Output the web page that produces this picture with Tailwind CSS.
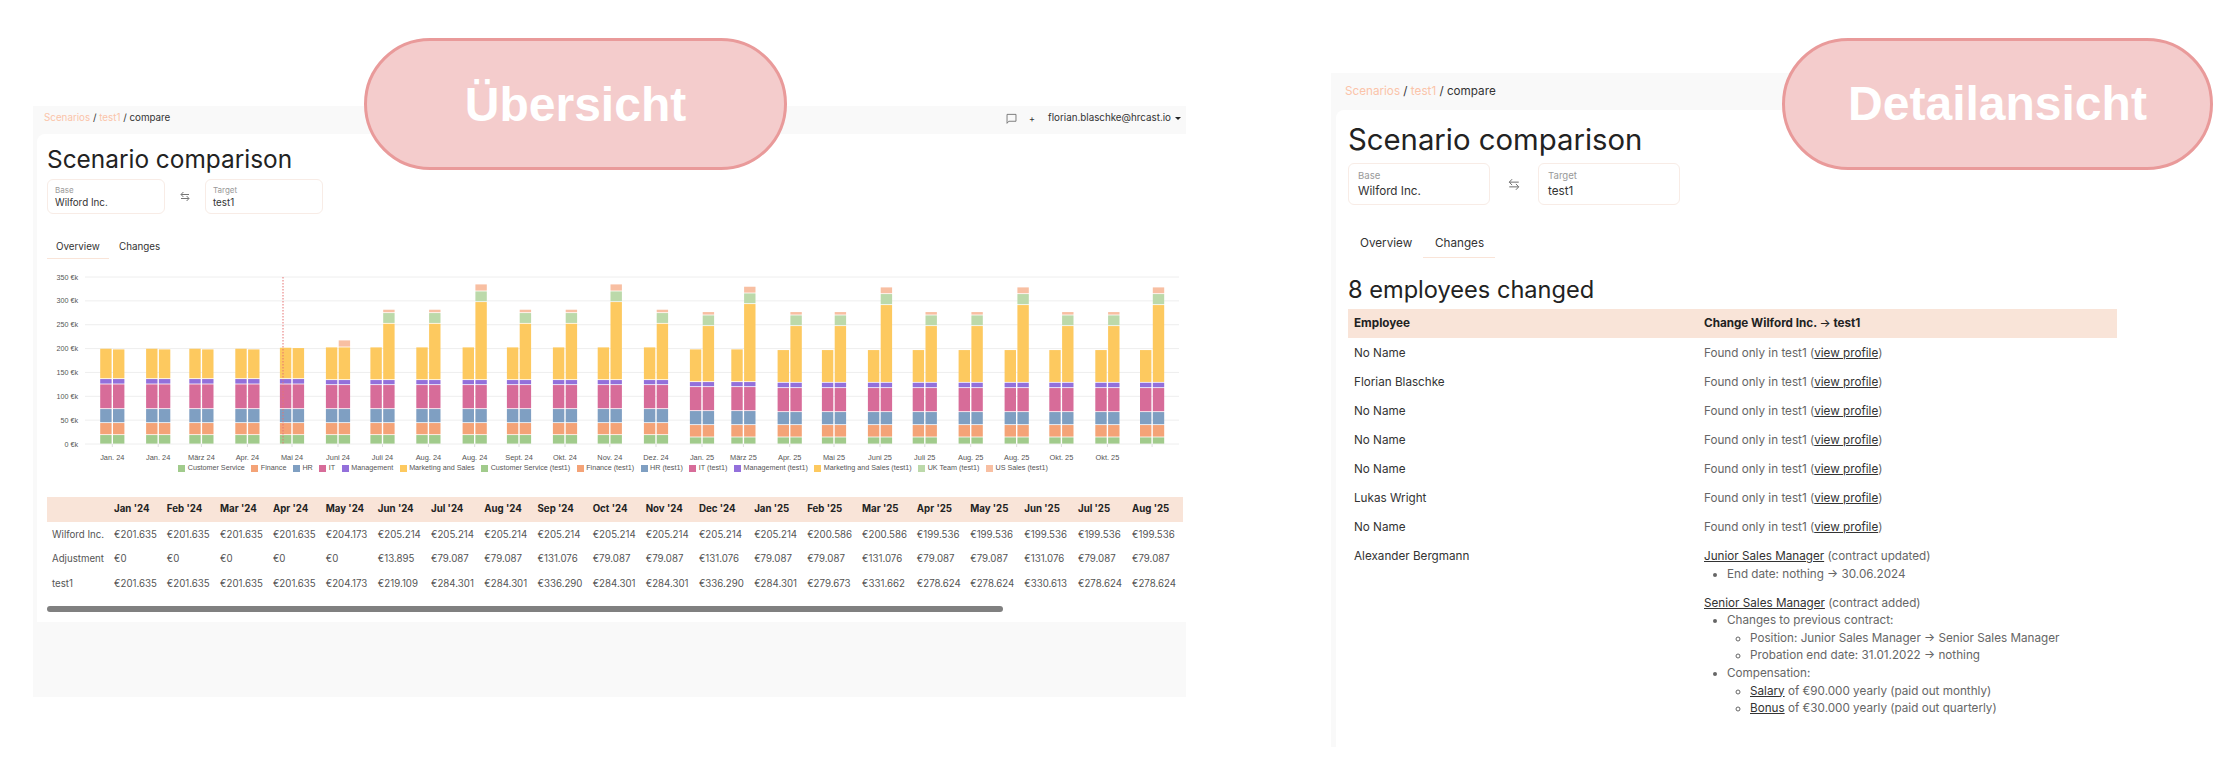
<!DOCTYPE html>
<html lang="en">
<head>
    <meta charset="UTF-8">
    <title>Scenario comparison</title>
    <script src="https://cdn.jsdelivr.net/npm/@tailwindcss/browser@4"></script>
</head>
<body class="bg-white">
<div class="relative w-[2234px] h-[781px] overflow-hidden flex items-start [font-family:Inter,sans-serif] text-[#333]">

    <!-- Overview panel -->
    <div class="ml-[33px] mt-[106px] w-[1153px] h-[591px] bg-[#f9f9f9] shrink-0">
        <div class="h-[28px] flex items-center justify-between pl-[11px] pr-[5px] pb-[3px] text-[9.8px]">
            <div><span class="text-[#fbc4a9]">Scenarios</span> / <span class="text-[#fbc4a9]">test1</span> / compare</div>
            <div class="flex items-center">
                <svg class="w-[11px] h-[11px] text-[#666]" viewBox="0 0 16 16" fill="none" stroke="currentColor" stroke-width="1.2"><path d="M1.5 15V2h13v10H4z"/></svg>
                <span class="ml-[12px] text-[9px]">+</span>
                <span class="ml-[13px]">florian.blaschke@hrcast.io</span>
                <span class="ml-[4px] w-0 h-0 border-x-[3px] border-x-transparent border-t-[3px] border-t-[#222]"></span>
            </div>
        </div>
        <div class="ml-[4px] bg-white rounded-tl-lg px-[10px] pt-[10px] pb-[10px] h-[488px]">
            <h1 class="text-[24.4px] leading-[30px] text-[#222] mb-[5px]">Scenario comparison</h1>
            <div class="flex items-center">
                <div class="w-[118px] h-[35px] border border-[#f8ece6] rounded-md pl-[7px] pt-[4px]">
                    <div class="text-[8px] leading-[12px] text-[#999]">Base</div>
                    <div class="text-[9.8px] leading-[13px]">Wilford Inc.</div>
                </div>
                <div class="w-[40px] flex justify-center">
                    <svg class="w-[10px] h-[11px] text-[#666]" viewBox="0 0 10 11" fill="none" stroke="currentColor" stroke-width="0.9"><path d="M9 3.5H1.2M3.4 1 1 3.5 3.4 6M1 7.5h7.8M6.6 5 9 7.5 6.6 10"/></svg>
                </div>
                <div class="w-[118px] h-[35px] border border-[#f8ece6] rounded-md pl-[7px] pt-[4px]">
                    <div class="text-[8px] leading-[12px] text-[#999]">Target</div>
                    <div class="text-[9.8px] leading-[13px]">test1</div>
                </div>
            </div>
            <div class="mt-[19px] flex text-[9.8px] h-[26px]">
                <div class="w-[62px] pl-[9px] pt-[7px] border-b border-[#f9e4d8]">Overview</div>
                <div class="pl-[10px] pt-[7px]">Changes</div>
            </div>

            <!-- Chart, drawn by renderChart below -->
            <svg id="costChart" class="block mt-[11px] w-[1132px] h-[192px]" viewBox="47 270 1132 192"></svg>
            <div id="chartLegend" class="h-[10px] w-[1132px] mt-[1px] flex justify-center items-center gap-[6.5px] text-[7.2px] text-[#555] [font-family:'Liberation_Sans',Arial,sans-serif]"></div>

            <div class="mt-[24px] w-[1136px] overflow-hidden">
                <table class="w-[1136px] table-fixed text-[9.7px] text-[#555] whitespace-nowrap text-left">
                    <colgroup id="costCols"></colgroup>
                    <thead id="costHead" class="bg-[#f9e4d8] text-[#222]"></thead>
                    <tbody id="costBody"></tbody>
                </table>
            </div>
            <div class="mt-[11px] w-[956px] h-[6px] rounded-full bg-[#808080]"></div>
        </div>
    </div>

    <!-- Detail panel -->
    <div class="ml-[145px] mt-[73px] w-[800px] h-[674px] bg-[#f9f9f9] shrink-0">
        <div class="h-[37px] flex items-center pl-[14px] text-[11.7px]">
            <div><span class="text-[#fbc4a9]">Scenarios</span> / <span class="text-[#fbc4a9]">test1</span> / compare</div>
        </div>
        <div class="ml-[5px] h-[637px] bg-white rounded-tl-lg px-[12px] pt-[12px]">
            <h1 class="text-[29.3px] leading-[36px] text-[#222] mb-[5px]">Scenario comparison</h1>
            <div class="flex items-center">
                <div class="w-[142px] h-[42px] border border-[#f8ece6] rounded-md pl-[9px] pt-[4px]">
                    <div class="text-[9.6px] leading-[15px] text-[#999]">Base</div>
                    <div class="text-[11.7px] leading-[16px]">Wilford Inc.</div>
                </div>
                <div class="w-[48px] flex justify-center">
                    <svg class="w-[12px] h-[13px] text-[#666]" viewBox="0 0 10 11" fill="none" stroke="currentColor" stroke-width="0.8"><path d="M9 3.5H1.2M3.4 1 1 3.5 3.4 6M1 7.5h7.8M6.6 5 9 7.5 6.6 10"/></svg>
                </div>
                <div class="w-[142px] h-[42px] border border-[#f8ece6] rounded-md pl-[9px] pt-[4px]">
                    <div class="text-[9.6px] leading-[15px] text-[#999]">Target</div>
                    <div class="text-[11.7px] leading-[16px]">test1</div>
                </div>
            </div>
            <div class="mt-[22px] flex text-[11.7px] h-[31px]">
                <div class="w-[75px] pl-[12px] pt-[8px]">Overview</div>
                <div class="w-[72px] pl-[12px] pt-[8px] border-b border-[#f9e4d8]">Changes</div>
            </div>
            <h2 class="mt-[16px] text-[23.6px] leading-[32px] text-[#222]">8 employees changed</h2>
            <table class="mt-[3px] w-[769px] table-fixed text-[11.7px] leading-[17.6px] text-left">
                <thead class="bg-[#f9e4d8] text-[#222]">
                    <tr class="h-[29px]">
                        <th class="w-[350px] px-[6px] font-bold">Employee</th>
                        <th class="px-[6px] font-bold">Change Wilford Inc. <span class="font-normal">→</span> test1</th>
                    </tr>
                </thead>
                <tbody id="changeBody" class="text-[#666]">
                    <tr>
                        <td class="px-[6px] pt-[7px] pb-[4px] align-top text-[#333]">Alexander Bergmann</td>
                        <td class="px-[6px] pt-[7px] pb-[4px] align-top">
                            <a class="underline text-[#333]">Junior Sales Manager</a> (contract updated)
                            <ul class="list-disc pl-[23px] mb-[11.5px]">
                                <li>End date: nothing → 30.06.2024</li>
                            </ul>
                            <a class="underline text-[#333]">Senior Sales Manager</a> (contract added)
                            <ul class="list-disc pl-[23px]">
                                <li>Changes to previous contract:
                                    <ul class="list-[circle] pl-[23px]">
                                        <li>Position: Junior Sales Manager → Senior Sales Manager</li>
                                        <li>Probation end date: 31.01.2022 → nothing</li>
                                    </ul>
                                </li>
                                <li>Compensation:
                                    <ul class="list-[circle] pl-[23px]">
                                        <li><a class="underline text-[#333]">Salary</a> of €90.000 yearly (paid out monthly)</li>
                                        <li><a class="underline text-[#333]">Bonus</a> of €30.000 yearly (paid out quarterly)</li>
                                    </ul>
                                </li>
                            </ul>
                        </td>
                    </tr>
                </tbody>
            </table>
        </div>
    </div>

    <!-- Callouts lying over the panels -->
    <div class="absolute left-[364px] top-[38px] w-[423px] h-[132px] rounded-full bg-[#f4cccc] border-[3px] border-[#e99a9a] pt-[2px] flex items-center justify-center text-white text-[48px] font-bold [font-family:'Liberation_Sans',Arial,sans-serif]">Übersicht</div>
    <div class="absolute left-[1782px] top-[38px] w-[431px] h-[132px] rounded-full bg-[#f4cccc] border-[3px] border-[#e99a9a] flex items-center justify-center text-white text-[48px] font-bold [font-family:'Liberation_Sans',Arial,sans-serif]">Detailansicht</div>
</div>

<script>
    const months = ["Jan '24","Feb '24","Mar '24","Apr '24","May '24","Jun '24","Jul '24","Aug '24","Sep '24","Oct '24","Nov '24","Dec '24","Jan '25","Feb '25","Mar '25","Apr '25","May '25","Jun '25","Jul '25","Aug '25"];
    const colWidths = [62,52.8,53.2,52.8,52.8,52.1,53.1,53.3,53.2,55.1,53,53.2,55.2,53,54.9,54.7,53.4,54,53.7,54,55.9];
    const costRows = [
        ['Wilford Inc.', ['201.635','201.635','201.635','201.635','204.173','205.214','205.214','205.214','205.214','205.214','205.214','205.214','205.214','200.586','200.586','199.536','199.536','199.536','199.536','199.536']],
        ['Adjustment', ['0','0','0','0','0','13.895','79.087','79.087','131.076','79.087','79.087','131.076','79.087','79.087','131.076','79.087','79.087','131.076','79.087','79.087']],
        ['test1', ['201.635','201.635','201.635','201.635','204.173','219.109','284.301','284.301','336.290','284.301','284.301','336.290','284.301','279.673','331.662','278.624','278.624','330.613','278.624','278.624']]
    ];

    function renderTable() {
        document.getElementById('costCols').innerHTML = colWidths.map(w => `<col style="width:${w}px">`).join('');
        let head = '<tr class="h-[24.6px]"><th class="px-[5px]"></th>';
        months.forEach(m => { head += `<th class="px-[5px] font-bold">${m}</th>`; });
        document.getElementById('costHead').innerHTML = head + '</tr>';
        document.getElementById('costBody').innerHTML = costRows.map(([name, values]) =>
            `<tr class="h-[24.6px]"><td class="px-[5px] pt-[2px]">${name}</td>` +
            values.map(v => `<td class="px-[5px] pt-[2px]">€${v}</td>`).join('') + '</tr>'
        ).join('');
    }

    function renderChanges() {
        const names = ['No Name','Florian Blaschke','No Name','No Name','No Name','Lukas Wright','No Name'];
        const rows = names.map(n => `<tr class="h-[29px]"><td class="px-[6px] pt-[2px] text-[#333]">${n}</td><td class="px-[6px] pt-[2px]">Found only in test1 (<a class="underline text-[#333]">view profile</a>)</td></tr>`).join('');
        document.getElementById('changeBody').insertAdjacentHTML('afterbegin', rows);
    }

    const colors = { cs: '#a1cb8c', fin: '#f4a377', hr: '#7f9fc2', it: '#d76c99', mgmt: '#9370db', mkt: '#fdc95f', uk: '#bcd9aa', us: '#f8bfa2' };

    function renderChart() {
        const y = v => 260 + v / 3;
        const centers = [112.3,158.2,201.4,247.4,292,338,382.5,428.4,474.7,519,565,609.8,656,702,743.4,789.7,834,880,924.8,970.7,1016.7,1061.4,1107.4,1152.1];
        const labels = ['Jan. 24','Jan. 24','März 24','Apr. 24','Mai 24','Juni 24','Juli 24','Aug. 24','Aug. 24','Sept. 24','Okt. 24','Nov. 24','Dez. 24','Jan. 25','März 25','Apr. 25','Mai 25','Juni 25','Juli 25','Aug. 25','Aug. 25','Okt. 25','Okt. 25',''];
        // segment tops in the base stack: cs, fin, hr, it, mgmt
        const early = [524,488,446,372,356];
        const mid = [524,488,446,374,359];
        const late = [531,494,452,380,365];
        const last = [531,494,455,383,367];
        // [stack, top of base bar, tops of target bar: marketing, uk, us]
        const groups = [
            [early,265,[267]],[early,265,[267]],[early,265,[267]],[early,265,[267]],[early,262,[263]],
            [mid,261,[261,261,240]],
            [mid,261,[190,158,148]],[mid,261,[190,158,148]],[mid,261,[125,93,72]],
            [mid,261,[190,158,148]],[mid,261,[190,158,148]],[mid,261,[125,93,72]],[mid,261,[190,158,148]],
            [late,267,[197,165,155]],[late,267,[131,99,79]],
            [last,269,[197,165,155]],[last,269,[197,165,155]],[last,269,[134,101,81]],
            [last,269,[197,165,155]],[last,269,[197,165,155]],[last,269,[134,101,81]],
            [last,269,[197,165,155]],[last,269,[197,165,155]],[last,269,[134,101,81]]
        ];
        let svg = '';
        const ticks = ['350','300','250','200','150','100','50','0'];
        ticks.forEach((t, i) => {
            const gy = 277 + i * 23.86;
            svg += `<line x1="85" x2="1179" y1="${gy}" y2="${gy}" stroke="#eeeeee"/>`;
            svg += `<text x="78" y="${gy + 2.5}" text-anchor="end" font-size="7.2" fill="#555" font-family="Liberation Sans, Arial, sans-serif">${t} €k</text>`;
        });
        const rect = (x, from, to, fill) => {
            const top = y(to), bottom = y(from);
            if (bottom - top < 0.5) return '';
            return `<rect x="${x}" y="${top + 0.4}" width="11.4" height="${bottom - top - 0.8}" fill="${fill}"/>`;
        };
        const order = ['cs','fin','hr','it','mgmt'];
        centers.forEach((c, i) => {
            const [stack, baseTop, extra] = groups[i];
            svg += `<line x1="${c}" x2="${c}" y1="444" y2="447" stroke="#dddddd"/>`;
            [[c - 12.1, [baseTop]], [c + 0.7, extra]].forEach(([x, tops]) => {
                let prev = 552;
                order.forEach((k, j) => { svg += rect(x, prev, stack[j], colors[k]); prev = stack[j]; });
                svg += rect(x, prev, tops[0], colors.mkt);
                if (tops.length > 1) {
                    svg += rect(x, tops[0], tops[1], colors.uk);
                    svg += rect(x, tops[1], tops[2], colors.us);
                }
            });
            if (labels[i]) svg += `<text x="${c}" y="459.5" text-anchor="middle" font-size="7.4" fill="#555" font-family="Liberation Sans, Arial, sans-serif">${labels[i]}</text>`;
        });
        svg += '<line x1="283" x2="283" y1="277" y2="444" stroke="#e57373" stroke-dasharray="1.5 1.5"/>';
        document.getElementById('costChart').innerHTML = svg;

        const legend = [['Customer Service','cs'],['Finance','fin'],['HR','hr'],['IT','it'],['Management','mgmt'],['Marketing and Sales','mkt'],['Customer Service (test1)','cs'],['Finance (test1)','fin'],['HR (test1)','hr'],['IT (test1)','it'],['Management (test1)','mgmt'],['Marketing and Sales (test1)','mkt'],['UK Team (test1)','uk'],['US Sales (test1)','us']];
        document.getElementById('chartLegend').innerHTML = legend.map(([name, key]) =>
            `<div class="flex items-center gap-[2.5px]"><span class="w-[7px] h-[7px]" style="background:${colors[key]}"></span><span>${name}</span></div>`
        ).join('');
    }

    renderTable();
    renderChanges();
    renderChart();
</script>
</body>
</html>
